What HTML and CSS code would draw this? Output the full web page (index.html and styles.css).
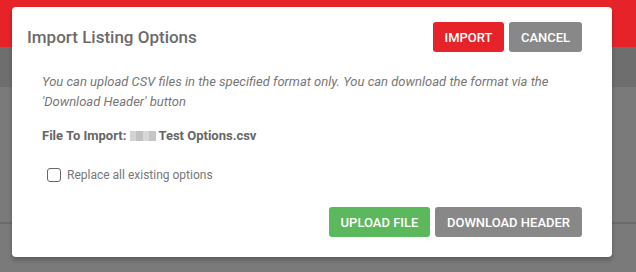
FILE: index.html
```html
<!DOCTYPE html>
<html lang="en">
<head>
    <meta charset="UTF-8">
    <title>Import Listing Options</title>
    <link rel="stylesheet" href="styles.css">
</head>
<body>
    <div class="page">
        <div class="topbar"></div>
        <div class="toolbar"></div>
        <div class="content">
            <div class="row-line"></div>
        </div>
    </div>

    <div class="modal">
        <div class="modal-header">
            <h3 class="modal-title">Import Listing Options</h3>
            <div class="actions">
                <button class="btn btn-red w-import">IMPORT</button>
                <button class="btn btn-gray w-cancel">CANCEL</button>
            </div>
        </div>
        <div class="modal-body">
            <p class="hint">You can upload CSV files in the specified format only. You can download the format via the 'Download Header' button</p>
            <p class="file-name">File To Import: <span class="blur"></span> Test Options.csv</p>
            <label class="check-row">
                <span class="checkbox"></span>
                <span>Replace all existing options</span>
            </label>
        </div>
        <div class="modal-footer">
            <button class="btn btn-green w-upload">UPLOAD FILE</button>
            <button class="btn btn-gray w-download">DOWNLOAD HEADER</button>
        </div>
    </div>
</body>
</html>
```

FILE: styles.css
```css
* {
    box-sizing: border-box;
}
body {
    margin: 0;
    font-family: 'Roboto', 'Liberation Sans', sans-serif;
    background-color: #7a7a7a;
    overflow: hidden;
}
.page {
    height: 272px;
    display: flex;
    flex-direction: column;
}
.topbar {
    height: 47px;
    background-color: #e62328;
}
.toolbar {
    height: 40px;
    background-color: #6e6e6e;
}
.content {
    flex: 1;
    background-color: #7a7a7a;
    padding-top: 135px;
}
.row-line {
    height: 2px;
    background-color: #6c6c6c;
}

.modal {
    position: absolute;
    left: 12px;
    top: 7px;
    width: 600px;
    height: 250px;
    background: #fff;
    border-radius: 4px;
    box-shadow: 0 3px 4px rgba(0, 0, 0, 0.25);
}
.modal-header {
    display: flex;
    align-items: center;
    justify-content: space-between;
    height: 45px;
    padding: 15px 30px 0 15px;
}
.modal-title {
    margin: 0;
    font-size: 17px;
    font-weight: 500;
    color: #6b6b6b;
}
.actions {
    display: flex;
    gap: 5px;
}
.btn {
    height: 30px;
    padding: 0;
    border: none;
    border-radius: 3px;
    color: #fff;
    font-family: 'Roboto', 'Liberation Sans', sans-serif;
    font-size: 13px;
    font-weight: 500;
    text-align: center;
    cursor: pointer;
}
.w-import { width: 71px; }
.w-cancel { width: 73px; }
.w-upload { width: 101px; }
.w-download { width: 147px; }
.btn-red { background-color: #e62328; }
.btn-gray { background-color: #888888; }
.btn-green { background-color: #5cb85c; }

.modal-body {
    padding: 20px 30px 0 30px;
}
.hint {
    margin: 0;
    font-size: 13px;
    line-height: 20px;
    font-style: italic;
    color: #777;
}
.file-name {
    margin: 14px 0 0 0;
    font-size: 13px;
    line-height: 20px;
    font-weight: bold;
    color: #666;
}
.blur {
    display: inline-block;
    width: 26px;
    height: 10px;
    vertical-align: -1px;
    background: linear-gradient(90deg, #d4d4d4 0 25%, #c0c0c0 25% 50%, #d8d8d8 50% 75%, #c6c6c6 75%);
}
.check-row {
    display: flex;
    align-items: center;
    gap: 6px;
    margin-top: 19px;
    padding-left: 5px;
    height: 20px;
    font-size: 12px;
    color: #777;
}
.checkbox {
    width: 14px;
    height: 14px;
    border: 1px solid #666;
    border-radius: 3px;
}
.modal-footer {
    display: flex;
    justify-content: flex-end;
    gap: 5px;
    padding: 22px 30px 0 0;
}
```
